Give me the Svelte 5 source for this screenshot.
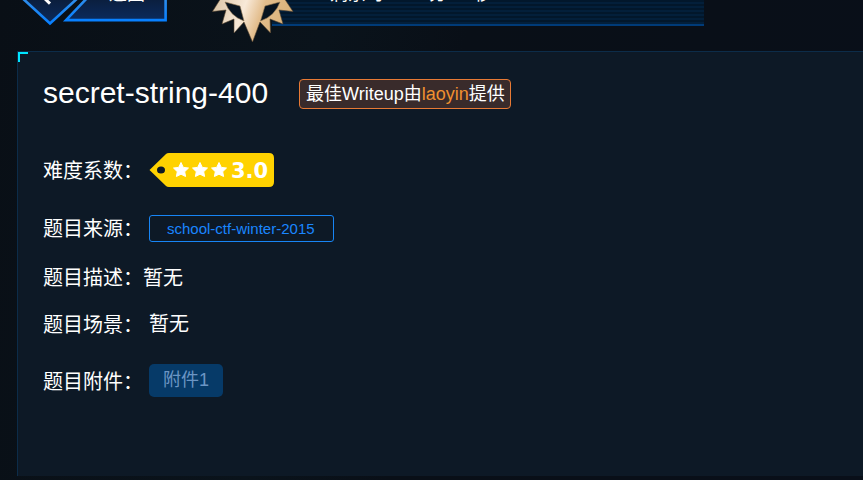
<script>
  const source = 'school-ctf-winter-2015';
  const author = 'laoyin';
</script>

<div class="page">
  <header>
    <a class="back" href="#list">
      <svg class="frame" viewBox="0 0 170 26" aria-hidden="true">
        <defs>
          <linearGradient id="edge" x1="0" y1="0" x2="0" y2="1">
            <stop offset="0" stop-color="#348fe8" />
            <stop offset="1" stop-color="#0880ff" />
          </linearGradient>
          <linearGradient id="fill" x1="0" y1="0" x2="0" y2="1">
            <stop offset="0" stop-color="#0b1c38" />
            <stop offset="1" stop-color="#0b2a5c" />
          </linearGradient>
        </defs>
        <path d="M20-4L50 23.500L80-4Z" fill="url(#fill)" stroke="url(#edge)" stroke-width="2.6" />
        <path d="M90-5L66 20.1H165.6V-5Z" fill="url(#fill)" stroke="url(#edge)" stroke-width="2.6" />
        <path d="M43-3L50 3.6" stroke="#fff" stroke-width="3" />
      </svg>
      <span>返回</span>
    </a>
    <div class="timer">剩余时：&emsp;&ensp;分&emsp;&ensp;秒</div>
    <svg class="medal" viewBox="0 0 84 43" aria-hidden="true">
      <defs>
        <linearGradient id="gold" x1="0" y1="0" x2="1" y2=".2">
          <stop offset="0" stop-color="#d9c2a2" />
          <stop offset=".42" stop-color="#f8e9d8" />
          <stop offset=".65" stop-color="#e3bd8c" />
          <stop offset="1" stop-color="#d9b27a" />
        </linearGradient>
      </defs>
      <path
        d="M10-2L1.500 11.500L15 10L11 24L23 19L23 33L33 22L41.500 42L49 22L59.500 33L59 19L72 24L68 10L82 11.500L73-2Z"
        fill="url(#gold)" stroke="#57452f" stroke-width=".6" />
      <path d="M14 2L29 6L33 21Q19 16 14 2ZM69 2L54 6L49.500 21Q64 16 69 2Z" fill="#07131f" stroke="#8e744f" stroke-width=".6" />
    </svg>
  </header>

  <main>
    <div class="heading">
      <h1>secret-string-400</h1>
      <p class="credit">最佳Writeup由<a href="#author">{author}</a>提供</p>
    </div>

    <dl>
      <div class="row rating">
        <dt>难度系数：</dt>
        <dd>
          <svg width="125" height="34" viewBox="0 0 125 34" role="img" aria-label="3.0">
            <path
              fill="#ffd200" fill-rule="evenodd"
              d="M.5 17L17 1Q18 0 20 0H120Q125 0 125 5V29Q125 34 120 34H20Q18 34 17 33ZM8 17a4 3.500 0 1 0 8 0a4 3.500 0 1 0-8 0Z" />
            {#each [32, 51, 70] as x}
              <path
                transform="translate({x} 17)" fill="#fff" stroke="#fff" stroke-width="1" stroke-linejoin="round"
                d="M0-7.500L2.300-2.600L7.500-2L3.700 1.700L4.600 6.500L0 4.200L-4.600 6.500L-3.700 1.700L-7.500-2L-2.300-2.600Z" />
            {/each}
            <text x="82" y="25">3.0</text>
          </svg>
        </dd>
      </div>
      <div class="row origin">
        <dt>题目来源：</dt>
        <dd><a class="source" href="#source">{source}</a></dd>
      </div>
      <div class="row description">
        <dt>题目描述：</dt>
        <dd>暂无</dd>
      </div>
      <div class="row scene">
        <dt>题目场景：</dt>
        <dd>暂无</dd>
      </div>
      <div class="row files">
        <dt>题目附件：</dt>
        <dd><button type="button">附件1</button></dd>
      </div>
    </dl>
  </main>
</div>

<style>
  :global(body) {
    margin: 0;
    background: #080e16;
  }
  .page {
    box-sizing: border-box;
    min-height: 100vh;
    display: flex;
    flex-direction: column;
    padding-bottom: 4px;
    overflow: hidden;
    color: #fff;
    font-family: "Liberation Sans", "Noto Sans CJK SC", sans-serif;
    background: linear-gradient(100deg, #090f16, #0a131b 35%, #090f17 50%, #090f19);
  }
  header {
    position: relative;
    display: flex;
    align-items: flex-start;
    height: 51px;
    overflow: hidden;
  }
  .back {
    position: relative;
    width: 272px;
    flex: none;
    color: #fff;
    text-decoration: none;
    font-size: 18px;
    line-height: 20px;
  }
  .frame {
    display: block;
    width: 170px;
    height: 26px;
  }
  .back span {
    position: absolute;
    left: 109px;
    top: -16px;
  }
  .timer {
    box-sizing: border-box;
    width: 432px;
    height: 42px;
    margin-top: -16px;
    padding-left: 58px;
    border-bottom: 2px solid #003b78;
    background: repeating-linear-gradient(#02172b 0 2px, #031f3a 2px 4px);
    font-size: 18px;
    line-height: 20px;
    white-space: pre;
  }
  .medal {
    position: absolute;
    left: 211px;
    top: 0;
    width: 84px;
    height: 43px;
  }
  main {
    position: relative;
    flex: 1;
    margin-left: 17px;
    padding: 24px 25px;
    border: solid #0c2c49;
    border-width: 1px 0 0 1px;
    background: #0d1926;
  }
  main::before {
    content: "";
    position: absolute;
    left: 0;
    top: 0;
    width: 8px;
    height: 8px;
    border: solid #00e5ff;
    border-width: 2px 0 0 2px;
  }
  .heading {
    display: flex;
    align-items: center;
    gap: 31px;
  }
  h1 {
    margin: 0;
    font-size: 30px;
    font-weight: 400;
    line-height: 34px;
  }
  .credit {
    margin: 2px 0 0;
    padding: 0 5px 0 6px;
    border: 1px solid #e87a35;
    border-radius: 4px;
    background: #392b2b;
    font-size: 18px;
    line-height: 28px;
  }
  .credit a {
    color: #f09030;
    text-decoration: none;
  }
  dl {
    margin: 37px 0 0;
    font-size: 20px;
    line-height: 30px;
  }
  .row {
    display: flex;
    align-items: center;
  }
  dt {
    padding-top: 2px;
  }
  dd {
    margin: 0 0 0 6px;
  }
  svg {
    display: block;
  }
  text {
    font: 700 21px "DejaVu Sans", sans-serif;
    fill: #fff;
  }
  .rating {
    height: 46px;
  }
  .origin {
    margin-top: 19px;
  }
  .source {
    display: block;
    padding: 0 18px 0 17px;
    border: 1px solid #1785f5;
    border-radius: 3px;
    color: #1a86ff;
    font-size: 15px;
    line-height: 25px;
    text-decoration: none;
  }
  .description {
    margin-top: 17px;
  }
  .description dd {
    margin-left: 0;
    padding-top: 2px;
  }
  .scene {
    margin-top: 15px;
  }
  .files {
    margin-top: 24px;
  }
  button {
    display: block;
    padding: 0 14px;
    border: 0;
    border-radius: 5px;
    background: #063a68;
    color: #6b95c4;
    font: inherit;
    font-size: 18px;
    line-height: 33px;
  }
</style>
